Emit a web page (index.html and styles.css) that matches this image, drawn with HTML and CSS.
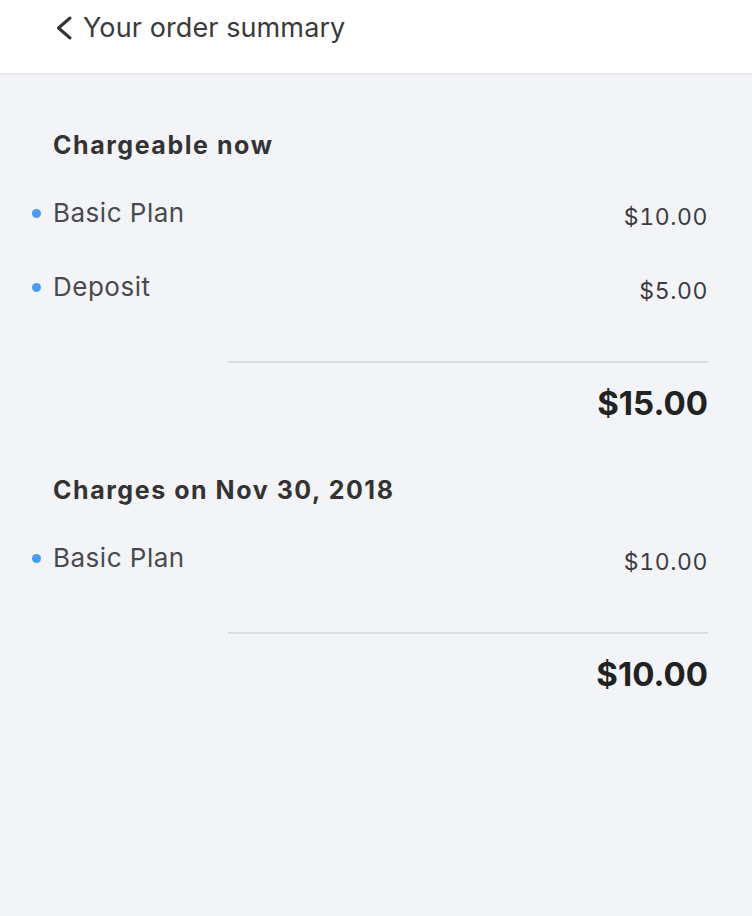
FILE: index.html
```html
<!DOCTYPE html>
<html lang="en">
<head>
<meta charset="utf-8">
<title>Your order summary</title>
<link rel="stylesheet" href="styles.css">
</head>
<body>
<header class="topbar">
  <a class="back" href="#">
    <svg class="chev" width="16" height="24" viewBox="0 0 16 24" aria-hidden="true"><path d="M14 2 L2.5 12 L14 22" fill="none" stroke="#333" stroke-width="3" stroke-linecap="round" stroke-linejoin="round"/></svg>
    <span>Your order summary</span>
  </a>
</header>
<main class="summary">
  <section class="group">
    <h2 class="group-title">Chargeable now</h2>
    <ul class="items">
      <li class="item"><span class="label">Basic Plan</span><span class="amount">$10.00</span></li>
      <li class="item"><span class="label">Deposit</span><span class="amount">$5.00</span></li>
    </ul>
    <div class="divider"></div>
    <div class="total">$15.00</div>
  </section>
  <section class="group">
    <h2 class="group-title">Charges on Nov 30, 2018</h2>
    <ul class="items">
      <li class="item"><span class="label">Basic Plan</span><span class="amount">$10.00</span></li>
    </ul>
    <div class="divider"></div>
    <div class="total">$10.00</div>
  </section>
</main>
</body>
</html>
```
FILE: styles.css
```css
* { box-sizing: border-box; }
html, body { margin: 0; padding: 0; }
body {
  font-family: Inter, "Liberation Sans", Arial, sans-serif;
  background: #f3f4f8;
  color: #333;
  min-height: 916px;
}
.topbar {
  height: 74px;
  background: #fff;
  border-bottom: 1px solid #e4e5ea;
  box-shadow: 0 1px 2px rgba(0,0,0,0.04);
  display: flex;
  align-items: flex-start;
  padding: 12px 0 0 56px;
}
.back {
  display: flex;
  align-items: center;
  gap: 11px;
  text-decoration: none;
  color: #3a3a3c;
  font-size: 27px;
  letter-spacing: 0.1px;
  line-height: 32px;
}
.chev { display: block; }
.summary {
  padding: 55px 44px 0 53px;
}
.group { display: flex; flex-direction: column; }
.group + .group { margin-top: 51px; }
.group-title {
  margin: 0;
  font-size: 25px;
  line-height: 32px;
  font-weight: 700;
  letter-spacing: 1.55px;
  color: #333;
}
.items {
  list-style: none;
  margin: 36px 0 0;
  padding: 0;
  display: flex;
  flex-direction: column;
  gap: 42px;
}
.item {
  position: relative;
  display: flex;
  justify-content: space-between;
  align-items: flex-start;
  height: 32px;
  line-height: 32px;
}
.item::before {
  content: "";
  position: absolute;
  left: -21px;
  top: 12px;
  width: 9px;
  height: 9px;
  border-radius: 50%;
  background: #4a9cf2;
}
.label {
  font-size: 26px;
  letter-spacing: 0.5px;
  color: #4a4a4e;
}
.amount {
  margin-top: 8px;
  font-size: 23px;
  line-height: 24px;
  font-variant-numeric: tabular-nums;
  letter-spacing: 0.6px;
  color: #3c3c40;
}
.divider {
  align-self: flex-end;
  width: 480px;
  height: 2px;
  background: #dcdde2;
  margin-top: 58px;
}
.total {
  margin-top: 20px;
  text-align: right;
  font-size: 33px;
  line-height: 40px;
  font-weight: 700;
  color: #222;
}
```
